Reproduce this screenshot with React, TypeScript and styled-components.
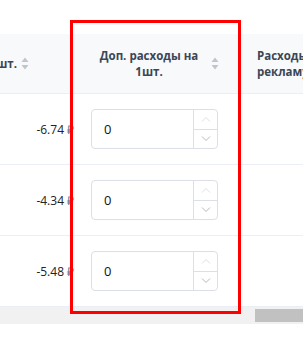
import React from "react";
import styled, { createGlobalStyle } from "styled-components";

const GlobalStyle = createGlobalStyle`
  html, body { margin: 0; padding: 0; background: #fff; }
  body { font-family: "Open Sans", "Liberation Sans", sans-serif; }
`;

const Page = styled.div`
  position: relative;
  width: 303px;
  height: 344px;
  overflow: hidden;
  padding-top: 34px;
  box-sizing: border-box;
`;

const Grid = styled.div`
  display: grid;
  grid-template-columns: 79px 152px 1fr;
  width: 303px;
`;

const HeadCell = styled.div<{ $align: "end" | "center" | "start" }>`
  height: 59px;
  background: #f8f9fa;
  border-bottom: 1px solid #ebeef5;
  display: flex;
  align-items: center;
  justify-content: ${(p) => (p.$align === "end" ? "flex-end" : p.$align === "start" ? "flex-start" : "center")};
  padding: ${(p) => (p.$align === "end" ? "0 50px 0 0" : p.$align === "start" ? "0 0 0 26px" : "0 12px")};
  box-sizing: content-box;
  overflow: visible;
  white-space: nowrap;
  font-size: 11.5px;
  font-weight: 700;
  color: #3b4656;
  line-height: 16px;
  min-width: 0;
`;

const HeadText = styled.div<{ $grow?: boolean }>`
  flex: ${(p) => (p.$grow ? "1" : "none")};
  text-align: ${(p) => (p.$grow ? "center" : "left")};
  white-space: ${(p) => (p.$grow ? "normal" : "nowrap")};
`;

const SortIcon = styled.svg`
  flex: none;
  width: 8px;
  height: 13px;
  margin-left: 4px;
`;

const Sort = () => (
  <SortIcon viewBox="0 0 8 13">
    <path d="M4 0.5 L7.5 5 H0.5 Z" fill="#c0c4cc" />
    <path d="M4 12.5 L7.5 8 H0.5 Z" fill="#c0c4cc" />
  </SortIcon>
);

const BodyCell = styled.div<{ $kind: "value" | "input" | "empty" }>`
  height: 70px;
  border-bottom: 1px solid #ebeef5;
  display: flex;
  align-items: center;
  justify-content: ${(p) => (p.$kind === "value" ? "flex-end" : "flex-start")};
  padding: ${(p) => (p.$kind === "value" ? "0 5px 0 0" : p.$kind === "input" ? "0 13px 0 12px" : "0")};
  font-family: "Open Sans", "Liberation Sans", sans-serif;
  font-size: 12px;
  color: #222;
  white-space: nowrap;
`;

const Rub = styled.span`
  color: #5b7fa8;
  margin-left: 3px;
`;

const NumInput = styled.div`
  flex: 1;
  height: 40px;
  box-sizing: border-box;
  border: 1px solid #dcdfe6;
  border-radius: 4px;
  display: flex;
  overflow: hidden;
`;

const InputValue = styled.div`
  flex: 1;
  display: flex;
  align-items: center;
  padding-left: 12px;
  font-size: 13px;
  color: #111;
`;

const Stepper = styled.div`
  width: 23px;
  border-left: 1px solid #dcdfe6;
  display: flex;
  flex-direction: column;
`;

const StepBtn = styled.div<{ $top?: boolean }>`
  flex: 1;
  display: flex;
  align-items: center;
  justify-content: center;
  border-bottom: ${(p) => (p.$top ? "1px solid #dcdfe6" : "none")};
`;

const Chevron = ({ up, color }: { up?: boolean; color: string }) => (
  <svg width="10" height="6" viewBox="0 0 10 6">
    <path
      d={up ? "M1 5.5 L5 1.5 L9 5.5" : "M1 0.5 L5 4.5 L9 0.5"}
      fill="none"
      stroke={color}
      strokeWidth="1"
    />
  </svg>
);

const ScrollTrack = styled.div`
  height: 17px;
  background: #f1f1f1;
  display: flex;
  justify-content: flex-end;
  align-items: center;
`;

const ScrollThumb = styled.div`
  width: 48px;
  height: 13px;
  background: #c1c1c1;
`;

const Highlight = styled.div`
  position: absolute;
  left: 70px;
  top: 20px;
  width: 171px;
  height: 294px;
  box-sizing: border-box;
  border: 3px solid #ff0000;
  pointer-events: none;
`;

const rows = ["-6.74", "-4.34", "-5.48"];

export default function App() {
  return (
    <>
      <GlobalStyle />
      <Page>
        <Grid>
          <HeadCell $align="end">
            <HeadText>Прибыль с 1шт.</HeadText>
            <Sort />
          </HeadCell>
          <HeadCell $align="center">
            <HeadText $grow>Доп. расходы на 1шт.</HeadText>
            <Sort />
          </HeadCell>
          <HeadCell $align="start">
            <HeadText>
              Расходы на
              <br />
              рекламу на 1шт.
            </HeadText>
          </HeadCell>
          {rows.map((v) => (
            <React.Fragment key={v}>
              <BodyCell $kind="value">
                {v}
                <Rub>₽</Rub>
              </BodyCell>
              <BodyCell $kind="input">
                <NumInput>
                  <InputValue>0</InputValue>
                  <Stepper>
                    <StepBtn $top>
                      <Chevron up color="#dcdfe6" />
                    </StepBtn>
                    <StepBtn>
                      <Chevron color="#b4b8c0" />
                    </StepBtn>
                  </Stepper>
                </NumInput>
              </BodyCell>
              <BodyCell $kind="empty" />
            </React.Fragment>
          ))}
        </Grid>
        <ScrollTrack>
          <ScrollThumb />
        </ScrollTrack>
        <Highlight />
      </Page>
    </>
  );
}
